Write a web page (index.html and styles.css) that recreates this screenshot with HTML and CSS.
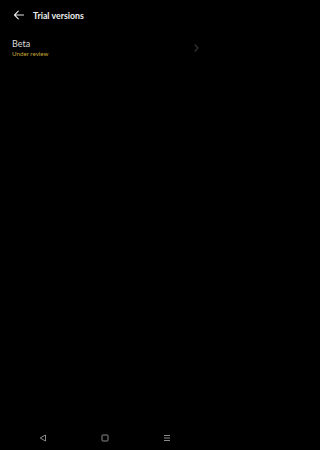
FILE: index.html
```html
<!DOCTYPE html>
<html>
<head>
<meta charset="utf-8">
<link rel="stylesheet" href="styles.css">
</head>
<body>
<div class="screen">
  <header class="topbar">
    <svg class="back" width="11" height="10" viewBox="0 0 11 10"><path d="M10.5 5H1.5M5.3 1.2L1.5 5l3.8 3.8" fill="none" stroke="#e8e8e8" stroke-width="1.1" stroke-linecap="round" stroke-linejoin="round"/></svg>
    <span class="title">Trial versions</span>
  </header>
  <div class="row">
    <div class="texts">
      <div class="name">Beta</div>
      <div class="status">Under review</div>
    </div>
    <svg class="chev" width="5" height="8" viewBox="0 0 5 8"><path d="M1 1l3 3-3 3" fill="none" stroke="#353535" stroke-width="1.2" stroke-linecap="round" stroke-linejoin="round"/></svg>
  </div>
  <div class="spacer"></div>
  <nav class="navbar">
    <svg width="8" height="8" viewBox="0 0 8 8"><path d="M6.5 1L1.2 4l5.3 3z" fill="none" stroke="#8a8a8a" stroke-width="1" stroke-linejoin="round"/></svg>
    <svg width="8" height="8" viewBox="0 0 8 8"><rect x="1" y="1" width="6" height="6" rx="0.8" fill="none" stroke="#8a8a8a" stroke-width="1"/></svg>
    <svg width="8" height="8" viewBox="0 0 8 8"><path d="M1 1.5h6M1 4h6M1 6.5h6" stroke="#8a8a8a" stroke-width="1"/></svg>
  </nav>
</div>
</body>
</html>
```
FILE: styles.css
```css
html, body {
  margin: 0;
  padding: 0;
  background: #000;
}
body {
  font-family: "Lato", "Noto Sans", sans-serif;
}
.screen {
  width: 209px;
  height: 450px;
  display: flex;
  flex-direction: column;
}
.topbar {
  height: 30px;
  display: flex;
  align-items: center;
  padding-left: 13px;
  gap: 9px;
}
.back { display: block; }
.title {
  color: #ededed;
  font-size: 8.8px;
  font-weight: 700;
}
.row {
  margin-top: 6px;
  height: 24px;
  padding: 0 12px;
  display: flex;
  align-items: center;
  justify-content: space-between;
}
.texts {
  display: flex;
  flex-direction: column;
  gap: 1px;
}
.name {
  color: #dcdcdc;
  font-size: 9px;
  line-height: 11px;
}
.status {
  color: #c8aa38;
  font-size: 6.2px;
  line-height: 8px;
}
.chev { display: block; margin-right: -2px; }
.spacer { flex: 1; }
.navbar {
  height: 24px;
  display: flex;
  align-items: center;
  justify-content: space-between;
  padding: 0 38px 0 39px;
}
.navbar svg { display: block; }
```
